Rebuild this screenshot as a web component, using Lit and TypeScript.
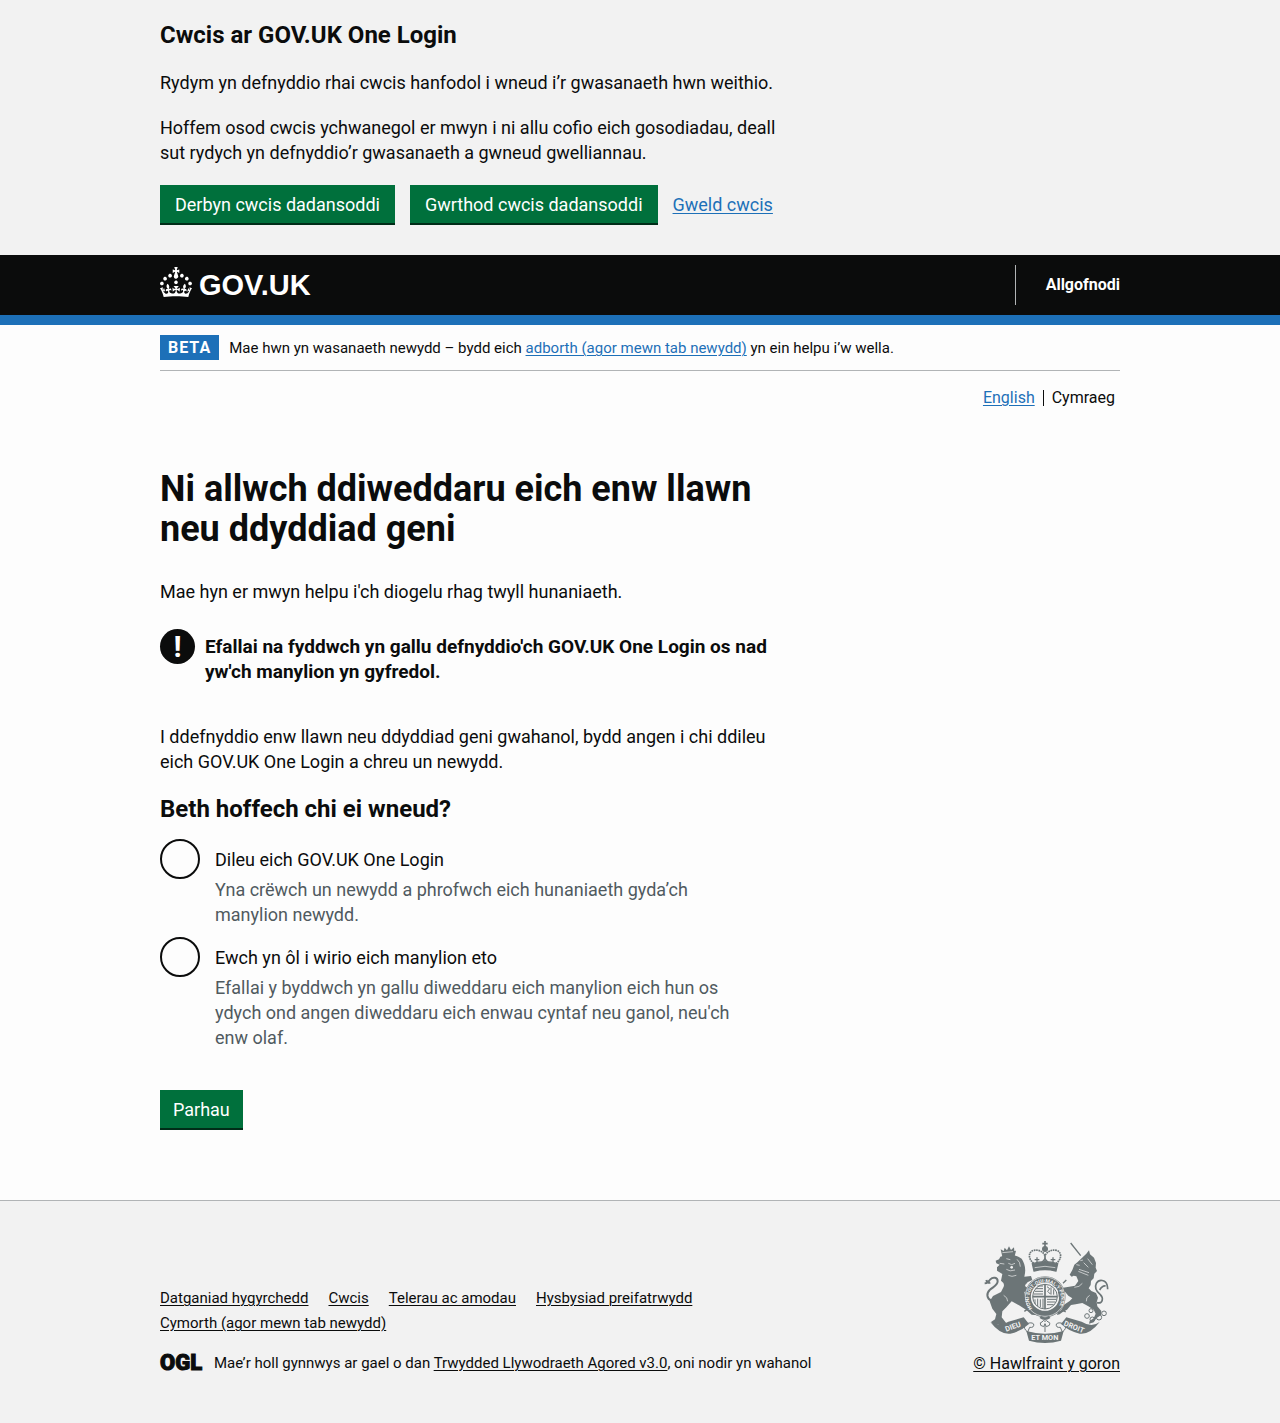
import { LitElement, html, svg, css } from "lit";
import { customElement, state } from "lit/decorators.js";

const CROWN =
  "M22.6 10.4c-1 .4-2-.1-2.4-1-.4-.9.1-2 1-2.4.9-.4 2 .1 2.4 1s-.1 2-1 2.4m-5.9 6.7c-.9.4-2-.1-2.4-1-.4-.9.1-2 1-2.4.9-.4 2 .1 2.4 1s-.1 2-1 2.4m10.8-3.7c-1 .4-2-.1-2.4-1-.4-.9.1-2 1-2.4.9-.4 2 .1 2.4 1s0 2-1 2.4m3.3 4.8c-1 .4-2-.1-2.4-1-.4-.9.1-2 1-2.4.9-.4 2 .1 2.4 1s-.1 2-1 2.4M17 4.7l2.3 1.2V2.5l-2.3.7-.2-.2.9-3h-3.4l.9 3-.2.2c-.1.1-2.3-.7-2.3-.7v3.4L15 4.7c.1.1.1.2.2.2l-1.3 4c-.1.2-.1.4-.1.6 0 1.1.8 2 1.9 2.2h.7c1-.2 1.9-1.1 1.9-2.1 0-.2 0-.4-.1-.6l-1.3-4c-.1-.2 0-.2.1-.3m-7.6 5.7c.9.4 2-.1 2.4-1 .4-.9-.1-2-1-2.4-.9-.4-2 .1-2.4 1s0 2 1 2.4m-5 3c.9.4 2-.1 2.4-1 .4-.9-.1-2-1-2.4-.9-.4-2 .1-2.4 1s.1 2 1 2.4m-3.2 4.8c.9.4 2-.1 2.4-1 .4-.9-.1-2-1-2.4-.9-.4-2 .1-2.4 1s0 2 1 2.4m14.8 11c4.4 0 8.6.3 12.3.8 1.1-4.5 2.4-7 3.7-8.8l-2.5-.9c.2 1.3.3 1.9 0 2.7-.4-.4-.8-1.1-1.1-2.3l-1.2 4c.7-.5 1.3-.8 2-.9-1.1 2.5-2.6 3.1-3.5 3-1.1-.2-1.7-1.2-1.5-2.1.3-1.2 1.5-1.5 2.1-.1 1.1-2.3-.8-3-2-2.3 1.9-1.9 2.1-3.5.6-5.6-2.1 1.6-2.1 3.2-1.2 5.5-1.2-1.4-3.2-.6-2.5 1.6.9-1.4 2.1-.5 1.9.8-.2 1.1-1.7 2.1-3.5 1.9-2.7-.2-2.9-2.1-2.9-3.6.7-.1 1.9.5 2.9 1.9l.4-4.3c-1.1 1.1-2.1 1.4-3.2 1.4.4-1.2 2.1-3 2.1-3h-5.4s1.7 1.9 2.1 3c-1.1 0-2.1-.2-3.2-1.4l.4 4.3c1-1.4 2.2-2 2.9-1.9-.1 1.5-.2 3.4-2.9 3.6-1.9.2-3.4-.8-3.5-1.9-.2-1.3 1-2.2 1.9-.8.7-2.3-1.2-3-2.5-1.6.9-2.2.9-3.9-1.2-5.5-1.5 2-1.3 3.7.6 5.6-1.2-.7-3.1 0-2 2.3.6-1.4 1.8-1.1 2.1.1.2.9-.3 1.9-1.5 2.1-.9.2-2.4-.5-3.5-3 .6 0 1.2.3 2 .9l-1.2-4c-.3 1.1-.7 1.9-1.1 2.3-.3-.8-.2-1.4 0-2.7l-2.9.9C1.3 23 2.6 25.5 3.7 30c3.7-.5 7.9-.8 12.3-.8";

/* Royal coat of arms: lion, unicorn, crown, garter with shield, motto scroll. */
const arms = svg`
  <path id="band" d="M190 235A48 48 0 1 1 266 235" fill="none"/>
  <g class="beast">
    <path d="M95 58l9 5 3-10 7 8 6-12 6 11 9-8 1 11 5-1-4 17q-20-5-36 6z"/>
    <path d="M94 80Q130 66 158 86 174 110 166 140L186 138 190 150 172 158 168 168 182 180 166 186 168 200 178 222 202 240 206 256 188 254 172 240 150 226 128 214 112 232 100 244 98 262 112 280 100 292 88 284 76 286 66 276 78 268 82 252 70 236 62 214 72 198 96 186 104 170Q108 160 96 152L100 132 84 122 84 112 92 104 82 100 80 92 90 88z"/>
    <path d="M352 71l8-10 3 12 12 10 6 16-1 14 4 10-8 8-2 14-8 8-1 12-6 10 8 8 14 6 6 14-4 14 2 12 12 14-1 12-14 10-8 12-14 4 2-8 12-8 6-14-6-12-16-10-18-10-20 4-14 2-12 14-14 8-8 6-8 2 2-8 12-8 6-14 18-12 8-8-12-8-10-12-14 8-2 10-10-6 4-10 8-8-12-10-10 2-4-6 8-6 12 2 14 12 14-2 22-4 10-14-6-14-8-2-6 3-6-6 8-14 6-16 10-8z"/>
  </g>
  <g class="line">
    <path d="M68 212c-16-6-16-22-6-32 12-10 24-14 24-26 0-12-14-14-22-6-6 6-8 12-17 12M52 150q2 10 12 8" stroke-width="6"/>
    <path d="M305 39l30 38" stroke-width="4"/>
    <path d="M384 218c18 4 20-14 10-24-12-10-18-22-12-34 8-14 28-10 32 4 2 8 2 10 2 14M392 180q8-14 18-12" stroke-width="5"/>
    <path d="M112 86l12 3M92 100l14 2M118 100q10 8 20 0M112 118q10 8 26 2M118 136q10 6 24 0M144 88q10 8 10 22M100 68l32-3M104 196q12 6 12 18" class="cut"/>
    <path d="M334 92l8-2M322 104l10 2M330 118l30 10M328 124l30 12M344 98l14 14M356 86l14 18M340 160q-8 12-24 12M362 196q-12 6-10 18" class="cut"/>
    <circle cx="128" cy="112" r="4" class="light"/>
  </g>
  <g class="line">
    <path d="M194 100C178 88 176 66 194 61c16-3 28 4 34 16 6-12 18-19 34-16 18 5 16 27 0 39" stroke-width="5" stroke-dasharray="5 2"/>
    <path d="M228 76v24M228 33v18M220 41h16" stroke-width="5"/>
    <circle cx="228" cy="57" r="7" class="fill"/>
    <path d="M204 82v16M197 89h14M252 82v16M245 89h14M218 98l10-12 10 12" stroke-width="4"/>
    <path d="M190 101q38-12 76 0l-5 22q-33-9-66 0z" class="fill"/>
    <path d="M197 113q31-8 62 0" class="cut"/>
  </g>
  <g class="line">
    <circle cx="228" cy="200" r="52" stroke-width="19"/>
    <circle cx="228" cy="200" r="59" class="cut"/>
    <circle cx="228" cy="200" r="41" class="light"/>
    <circle cx="228" cy="200" r="37" stroke-width="3"/>
    <path d="M228 163v74M191 200h74" stroke-width="5"/>
    <path d="M200 176h22M197 184h25M195 192h27M205 168h17M234 170l8 6-6 8 8 8M246 172v22M254 178v16M198 208v14M206 206v22M214 208v24M222 206v28M234 208h28M234 216h26M234 224h20" stroke-width="3"/>
    <path d="M214 261q14 10 28 0" stroke-width="8"/>
    <path d="M164 150l10 10M166 244l12-8M292 150l-10 10M290 246l-12-8" stroke-width="4"/>
    <path d="M228 306v-22M215 286q-4-10 4-10 4-8 9-2 5-6 9 2 8 0 4 10l-9 4-4-9-4 9z" stroke-width="3"/>
    <path d="M168 284q-6 12 8 22l6-14q14 2 12-10-8-8-26 2M288 284q6 12-8 22l-6-14q-14 2-12-10 8-8 26 2" stroke-width="3"/>
  </g>
  <g class="beast">
    <path d="M64 276q24 18 54-1l46-13 16 20q-24 22-56 29-30 4-60-35z"/>
    <path d="M392 276q-24 18-54-1l-46-13-16 20q24 22 56 29 30 4 60-35z"/>
    <path d="M172 303q56 16 112 0l-8 29q-48 14-96 0z"/>
  </g>
  <g class="line">
    <circle cx="366" cy="242" r="6" stroke-width="3"/><circle cx="354" cy="258" r="7" stroke-width="3"/><circle cx="370" cy="268" r="7" stroke-width="3"/><circle cx="390" cy="262" r="8" stroke-width="3"/><circle cx="405" cy="250" r="7" stroke-width="3"/>
  </g>
  <text class="garter"><textPath href="#band">HONI·SOIT·QUI·MAL·Y·PENSE</textPath></text>
  <text class="motto" x="112" y="305" transform="rotate(-20 112 305)">DIEU</text>
  <text class="motto" x="187" y="330">ET MON</text>
  <text class="motto" x="283" y="286" transform="rotate(22 283 286)">DROIT</text>
`;

@customElement("app-root")
export class AppRoot extends LitElement {
  @state() private choice = "";

  static styles = css`
    :host {
      display: block;
      background: #fdfdfd;
      color: #0b0c0c;
      font-family: Roboto, "Liberation Sans", sans-serif;
      font-size: 18px;
      line-height: 25px;
    }
    *, *::before, *::after { box-sizing: border-box; }
    h1, h2, p, ul, fieldset { margin: 0; padding: 0; border: 0; }
    h1 { font-size: 36px; line-height: 40px; margin-bottom: 30px; }
    h2, legend { font-size: 24px; line-height: 30px; font-weight: 700; padding: 0; }
    a { color: #1d70b8; text-decoration: underline; text-decoration-thickness: 1px; text-underline-offset: 2px; }
    .container { max-width: 960px; margin: 0 auto; }
    .column { max-width: 630px; }

    .cookies { background: #f2f2f2; padding: 20px 0 30px; }
    .cookies .column { display: grid; gap: 20px; }
    .actions { display: flex; align-items: flex-start; gap: 15px; line-height: 40px; }
    .button {
      font: inherit;
      line-height: 20px;
      color: #fff;
      background: #00703c;
      border: 0;
      border-radius: 0;
      padding: 10px 13px 8px;
      margin-bottom: 2px;
      box-shadow: 0 2px 0 #002d18;
      cursor: pointer;
    }
    .actions .button { padding-left: 15px; padding-right: 15px; }

    .header { background: #0b0c0c; border-bottom: 10px solid #1d70b8; }
    .header .container { display: flex; justify-content: space-between; align-items: center; height: 60px; }
    .brand { display: flex; align-items: center; gap: 7px; color: #fff; text-decoration: none; font: 700 29px/30px "Liberation Sans", Arial, sans-serif; }
    .crown { width: 32px; height: 30px; fill: #fff; margin-bottom: 6px; }
    .signout { border-left: 1px solid #b1b4b6; padding-left: 30px; line-height: 40px; font-size: 16px; }
    .signout a { color: #fff; font-weight: 700; text-decoration: none; }

    .phase { display: flex; align-items: baseline; gap: 10px; padding: 10px 0 9px; border-bottom: 1px solid #b1b4b6; font-size: 15px; }
    .tag { background: #1d70b8; color: #fff; font-size: 16px; font-weight: 700; letter-spacing: 1px; padding: 0 8px; }
    .languages { display: flex; justify-content: flex-end; padding: 17px 5px 0; list-style: none; font-size: 16px; line-height: 20px; }
    .languages li + li { position: relative; margin-left: 8px; padding-left: 9px; }
    .languages li + li::before { content: ""; position: absolute; left: 0; top: 2px; bottom: 2px; border-left: 1px solid #0b0c0c; }

    .content { padding: 61px 0 70px; }
    .lead { margin-bottom: 25px; }
    .warning { display: flex; gap: 10px; margin-bottom: 40px; font-size: 19px; font-weight: 700; }
    .mark { flex: none; width: 35px; height: 35px; border-radius: 50%; background: #0b0c0c; color: #fff; text-align: center; font-size: 30px; line-height: 35px; }
    .warning p { padding-top: 5px; }
    .details { margin-bottom: 20px; }
    legend { margin-bottom: 15px; }
    .option { display: grid; grid-template-columns: 40px 1fr; column-gap: 15px; }
    .option + .option { margin-top: 10px; }
    .option input { appearance: none; grid-row: 1 / span 2; width: 40px; height: 40px; margin: 0; border: 2px solid #0b0c0c; border-radius: 50%; background: transparent; }
    .option input:checked { background: radial-gradient(#0b0c0c 10px, transparent 11px); }
    .option label { padding-top: 8px; }
    .hint { color: #505a5f; padding: 5px 30px 0 0; }
    form .button { margin-top: 40px; }

    .footer { background: #f2f2f2; border-top: 1px solid #b1b4b6; padding: 40px 0 48px; font-size: 15px; }
    .footer a { color: #0b0c0c; }
    .footer .container { display: flex; justify-content: space-between; align-items: flex-end; }
    .meta { max-width: 700px; }
    .links { display: flex; flex-wrap: wrap; column-gap: 20px; list-style: none; margin-bottom: 15px; }
    .licence { display: flex; align-items: center; gap: 12px; }
    .ogl { flex: none; width: 42px; height: 20px; margin-bottom: 4px; overflow: visible; }
    .ogl text { font: 900 22px Roboto, sans-serif; fill: #0b0c0c; stroke: #0b0c0c; stroke-width: 1px; }
    .copyright { display: grid; justify-items: center; gap: 8px; text-align: center; font-size: 16px; }
    .arms { width: 125px; height: 102px; overflow: visible; }
    .line { fill: none; stroke: #6c7577; stroke-width: 4; }
    .line .fill { fill: #6c7577; }
    .line .light { fill: #f2f2f2; stroke: none; }
    .line .cut { stroke: #f2f2f2; stroke-width: 2; }
    .beast { fill: #6c7577; }
    .motto { fill: #f2f2f2; font: 700 22px Roboto, sans-serif; }
    .garter { fill: #f2f2f2; font: 700 15px Roboto, sans-serif; }
  `;

  private option(id: string, label: string, hint: string) {
    return html`
      <div class="option">
        <input type="radio" name="choice" id=${id} .checked=${this.choice === id}
          aria-describedby="${id}-hint" @change=${() => (this.choice = id)} />
        <label for=${id}>${label}</label>
        <div class="hint" id="${id}-hint">${hint}</div>
      </div>`;
  }

  render() {
    const links = ["Datganiad hygyrchedd", "Cwcis", "Telerau ac amodau", "Hysbysiad preifatrwydd", "Cymorth (agor mewn tab newydd)"];
    return html`
      <section class="cookies" aria-label="Cwcis ar GOV.UK One Login">
        <div class="container"><div class="column">
          <h2>Cwcis ar GOV.UK One Login</h2>
          <p>Rydym yn defnyddio rhai cwcis hanfodol i wneud i’r gwasanaeth hwn weithio.</p>
          <p>Hoffem osod cwcis ychwanegol er mwyn i ni allu cofio eich gosodiadau, deall sut rydych yn defnyddio’r gwasanaeth a gwneud gwelliannau.</p>
          <div class="actions">
            <button class="button" type="button">Derbyn cwcis dadansoddi</button>
            <button class="button" type="button">Gwrthod cwcis dadansoddi</button>
            <a href="#cwcis">Gweld cwcis</a>
          </div>
        </div></div>
      </section>
      <header class="header">
        <div class="container">
          <a class="brand" href="#"><svg class="crown" viewBox="0 0 32 30" aria-hidden="true"><path d=${CROWN}></path></svg>GOV.UK</a>
          <nav class="signout"><a href="#allgofnodi">Allgofnodi</a></nav>
        </div>
      </header>
      <div class="container">
        <div class="phase">
          <strong class="tag">BETA</strong>
          <span>Mae hwn yn wasanaeth newydd – bydd eich <a href="#adborth">adborth (agor mewn tab newydd)</a> yn ein helpu i’w wella.</span>
        </div>
        <nav><ul class="languages"><li><a href="#en">English</a></li><li>Cymraeg</li></ul></nav>
        <main class="content"><div class="column">
          <h1>Ni allwch ddiweddaru eich enw llawn neu ddyddiad geni</h1>
          <p class="lead">Mae hyn er mwyn helpu i'ch diogelu rhag twyll hunaniaeth.</p>
          <div class="warning">
            <span class="mark" aria-hidden="true">!</span>
            <p>Efallai na fyddwch yn gallu defnyddio'ch GOV.UK One Login os nad yw'ch manylion yn gyfredol.</p>
          </div>
          <p class="details">I ddefnyddio enw llawn neu ddyddiad geni gwahanol, bydd angen i chi ddileu eich GOV.UK One Login a chreu un newydd.</p>
          <form @submit=${(e: Event) => e.preventDefault()}>
            <fieldset>
              <legend>Beth hoffech chi ei wneud?</legend>
              ${this.option("dileu", "Dileu eich GOV.UK One Login", "Yna crëwch un newydd a phrofwch eich hunaniaeth gyda’ch manylion newydd.")}
              ${this.option("gwirio", "Ewch yn ôl i wirio eich manylion eto", "Efallai y byddwch yn gallu diweddaru eich manylion eich hun os ydych ond angen diweddaru eich enwau cyntaf neu ganol, neu'ch enw olaf.")}
            </fieldset>
            <button class="button" type="submit">Parhau</button>
          </form>
        </div></main>
      </div>
      <footer class="footer">
        <div class="container">
          <div class="meta">
            <ul class="links">${links.map((l) => html`<li><a href="#">${l}</a></li>`)}</ul>
            <div class="licence">
              <svg class="ogl" viewBox="0 0 42 20" aria-hidden="true"><text x="0" y="18">OGL</text></svg>
              <span>Mae’r holl gynnwys ar gael o dan <a href="#ogl">Trwydded Llywodraeth Agored v3.0</a>, oni nodir yn wahanol</span>
            </div>
          </div>
          <a class="copyright" href="#hawlfraint">
            <svg class="arms" viewBox="45 33 375 306" aria-hidden="true">${arms}</svg>
            <span>© Hawlfraint y goron</span>
          </a>
        </div>
      </footer>`;
  }
}
